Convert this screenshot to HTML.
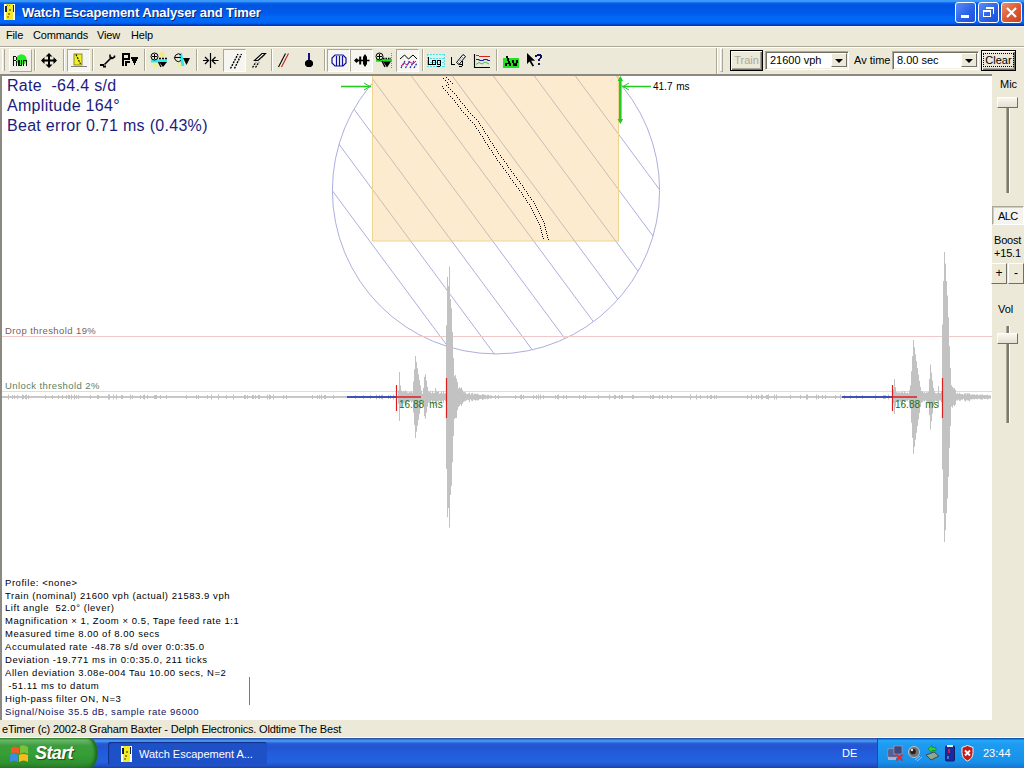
<!DOCTYPE html>
<html><head><meta charset="utf-8">
<style>
*{margin:0;padding:0;box-sizing:border-box}
html,body{width:1024px;height:768px;overflow:hidden;background:#ECE9D8;font-family:"Liberation Sans",sans-serif;position:relative}
.a{position:absolute;white-space:nowrap}
#title{left:0;top:0;width:1024px;height:26px;background:linear-gradient(#3D9BFF 0px,#3A95F8 1.5px,#0A60E6 3px,#0056E2 5px,#0058E8 10px,#005EF0 15px,#0068F4 17px,#0068F8 22px,#005AE8 23.5px,#0038AC 25px,#0038AC 26px)}
#title .t{left:22px;top:5px;letter-spacing:-0.1px;color:#fff;font-weight:bold;font-size:13px;text-shadow:1px 1px 0 #0A1E6E}
.tb{top:2px;width:21px;height:21px;border:1px solid #fff;border-radius:3px;background:linear-gradient(135deg,#5E8CF6,#2760E8 60%,#1F50D8)}
#menu{left:0;top:26px;width:1024px;height:20px;background:#ECE9D8;font-size:11px;border-top:1px solid #F4F2F8;letter-spacing:-0.15px}
#menu span{margin-top:-1px}
#menu span{position:absolute;top:3px}
#tbline{left:0;top:46px;width:1024px;height:1px;background:#ACA899}
#tbline2{left:0;top:47px;width:1024px;height:1px;background:#fff}
#client{left:0;top:74px;width:992px;height:646px;background:#fff;border-top:2px solid #8C8A80;border-left:2px solid #8C8A80}
#panel{left:992px;top:74px;width:32px;height:646px;background:#ECE9D8}
#status{left:0;top:720px;width:1024px;height:18px;border-bottom:1px solid #F8F8FF;background:#ECE9D8;font-size:11px;letter-spacing:-0.17px}
#taskbar{left:0;top:738px;width:1024px;height:30px;background:linear-gradient(#2A56B0 0px,#2A56B0 1px,#4590EA 2px,#4590EA 3.5px,#2A62DA 5px,#2157D2 7px,#2455D4 11px,#225DDC 15px,#2462DE 24px,#1F4FC4 28px,#1A3FA8 30px)}
.sep{top:49px;width:2px;height:22px;border-left:1px solid #ACA899;border-right:1px solid #fff}
.pr{top:49px;height:23px;background:#F6F5F0;border:1px solid #ACA899;border-right-color:#fff;border-bottom-color:#fff}
.info{font-size:9.5px;color:#000;left:5px;letter-spacing:0.55px}
.ms{font-size:10px;color:#000}
.btn{background:#ECE9D8;border:1px solid #000;font-size:11px;text-align:center;box-shadow:inset 1px 1px 0 #fff, inset -1px -1px 0 #716F64, inset -2px -2px 0 #ACA899}
.combo{background:#fff;border:1px solid #fff;border-top-color:#ACA899;border-left-color:#ACA899;box-shadow:inset 1px 1px 0 #716F64, inset -1px -1px 0 #F1EFE2;font-size:11px}
.sl{width:21px;height:11px;background:linear-gradient(#F8F7F2,#E3E0D0);border:1px solid #fff;border-right-color:#716F64;border-bottom-color:#716F64}
</style></head><body>
<div id="title" class="a">
  <svg class="a" style="left:0;top:0" width="20" height="24" shape-rendering="crispEdges">
    <rect x="4" y="4" width="11" height="16" fill="#fff"/>
    <rect x="6" y="4" width="7" height="16" fill="#F4EC20"/>
    <rect x="5" y="6" width="1.5" height="6" fill="#10205A"/>
    <rect x="12.5" y="5" width="1.5" height="7" fill="#10205A"/>
    <rect x="7" y="5" width="1" height="1" fill="#A09010"/><rect x="9" y="5" width="1" height="1" fill="#A09010"/>
    <rect x="9" y="9" width="2" height="2" fill="#908810"/><rect x="8" y="13" width="2" height="2" fill="#908810"/>
    <rect x="7" y="16" width="2" height="2" fill="#E09010"/>
  </svg>
  <div class="a t">Watch Escapement Analyser and Timer</div>
  <div class="a tb" style="left:955px"><div class="a" style="left:5px;top:12px;width:8px;height:3px;background:#fff"></div></div>
  <div class="a tb" style="left:978px"><div class="a" style="left:4px;top:7px;width:8px;height:7px;border:1px solid #fff;border-top-width:2px"></div><div class="a" style="left:7px;top:4px;width:8px;height:7px;border:1px solid #fff;border-top-width:2px;border-left:none;border-bottom:none"></div></div>
  <div class="a tb" style="left:1001px;background:linear-gradient(135deg,#E9916F,#E05A32 50%,#C9431F)"><svg class="a" style="left:3px;top:3px" width="13" height="13"><path d="M2 2L11 11M11 2L2 11" stroke="#fff" stroke-width="2.2"/></svg></div>
</div>
<div id="menu" class="a">
  <span style="left:6px">File</span>
  <span style="left:33px">Commands</span>
  <span style="left:97px">View</span>
  <span style="left:131px">Help</span>
</div>
<div id="tbline" class="a"></div>
<div id="tbline2" class="a"></div>

<!-- toolbar -->
<div class="a" style="left:2px;top:49px;width:3px;height:22px;border-left:1px solid #fff;border-right:1px solid #ACA899"></div>
<div class="a" style="left:9px;top:49px;width:23px;height:23px;background:#F2F0E8;border:1px solid #fff;border-right-color:#ACA899;border-bottom-color:#ACA899"></div>
<div class="a sep" style="left:34px"></div>
<div class="a sep" style="left:63px"></div>
<div class="a pr" style="left:67px;width:23px"></div>
<div class="a sep" style="left:92px"></div>
<div class="a sep" style="left:144px"></div>
<div class="a sep" style="left:196px"></div>
<div class="a pr" style="left:223px;width:23px"></div>
<div class="a sep" style="left:271px"></div>
<div class="a sep" style="left:324px"></div>
<div class="a pr" style="left:327px;width:23px"></div>
<div class="a pr" style="left:350px;width:23px"></div>
<div class="a pr" style="left:396px;width:23px"></div>
<div class="a sep" style="left:422px"></div>
<div class="a sep" style="left:496px"></div>
<div class="a" style="left:716px;top:48px;width:2px;height:26px;border-left:1px solid #ACA899;border-right:1px solid #fff"></div>
<div class="a" style="left:720px;top:48px;width:3px;height:24px;border:1px solid #fff;border-right-color:#ACA899;border-bottom-color:#ACA899"></div>

<svg class="a" style="left:0;top:0" width="1024" height="76">
  <!-- Run -->
  <circle cx="21.5" cy="59.5" r="5.2" fill="#22EE22"/>
  <g fill="#041804" shape-rendering="crispEdges">
    <path d="M13 56h3.3v1h1v3.3h-1v0.7h1v5h-1.3v-5h-1.7v5h-1.3zM14.3 57.2v3h2v-3z"/>
    <path d="M18.4 60h1.2v5h1.1v-5h1.2v6h-3.5z"/>
    <path d="M23 60h4v6h-1.2v-5h-1.6v5h-1.2z"/>
  </g>
  <!-- move -->
  <path d="M49 54.5V66.5M42.5 60.5H55.5" stroke="#000" stroke-width="2"/>
  <path d="M49 53l-3.5 3.5h7zM49 68l-3.5-3.5h7zM41 60.5l3.5-3.5v7zM57 60.5l-3.5-3.5v7z" fill="#000"/>
  <!-- yellow -->
  <rect x="74" y="54" width="8" height="11" fill="#F0F020" stroke="#707020" stroke-width="0.8"/>
  <path d="M76 54.5L80.5 64" stroke="#000" stroke-width="1.1" stroke-dasharray="2 1"/>
  <path d="M71 66.5H87" stroke="#808080" stroke-width="1"/>
  <!-- wrench -->
  <path d="M104.5 64.5L112 57" stroke="#000" stroke-width="1.6"/>
  <path d="M110 54.5v2.5l2 1.5 2.5-1.5v-1.5" stroke="#000" stroke-width="1.5" fill="none"/>
  <path d="M100 64h4v1.5h2v2h-3v-1.5h-3z" fill="#000"/>
  <!-- P down -->
  <g fill="#000" shape-rendering="crispEdges">
    <path d="M122 53h8v7h-6v5.5h-2zM124 55v3h4v-3z"/>
    <path d="M125 61h5v1.5h-3v3h-2z"/>
    <path d="M131 57h7v2h-1v2h-1v2h-1v1.5h-1v-1.5h-1v-2h-1v-2h-1z"/>
  </g>
  <!-- zoom + -->
  <circle cx="162" cy="54.5" r="2.6" fill="#F4E880"/>
  <circle cx="155.5" cy="64.5" r="2.6" fill="#F0F090"/>
  <path d="M151 61H167" stroke="#30E8F0" stroke-width="3"/>
  <circle cx="154.5" cy="56.5" r="3.5" stroke="#000" stroke-width="1" fill="none"/>
  <path d="M152 56h5v1h-5zM154 54h1v5h-1z" fill="#000" shape-rendering="crispEdges"/>
  <path d="M159 58.5h8" stroke="#000" stroke-width="1.3" stroke-dasharray="2 1"/>
  <path d="M159 62h8l-4 5z" fill="#000"/>
  <path d="M158.5 62l2.5 5" stroke="#000" stroke-width="1.3"/>
  <!-- zoom - -->
  <circle cx="180" cy="64.5" r="2.2" fill="#F0F090"/>
  <path d="M180.5 53L183 66" stroke="#30E8F0" stroke-width="3"/>
  <path d="M181 55a3.8 3.8 0 1 0 0 5.5" stroke="#000" stroke-width="1" fill="none"/>
  <path d="M175 57.5h6" stroke="#000" stroke-width="1.1"/>
  <path d="M183 58h7l-3.5 7z" fill="#000"/>
  <!-- ->|<- -->
  <path d="M210.5 53V68M203 60.5h5.5M212.5 60.5h6" stroke="#000" stroke-width="1.2"/>
  <path d="M205 57l3.5 3.5-3.5 3.5M215.5 57l-3.5 3.5 3.5 3.5" stroke="#000" stroke-width="1.2" fill="none"/>
  <!-- // -->
  <path d="M230.5 68.5L238 54M234.5 68.5L241.5 54" stroke="#000" stroke-width="1.4" stroke-dasharray="2 1"/>
  <!-- pencil // -->
  <path d="M254.5 60.5l7.5-7h3.5l-7.5 7z" fill="#fff" stroke="#000" stroke-width="1.1"/>
  <path d="M259 60l6-5" stroke="#000" stroke-width="0.8" stroke-dasharray="1 1"/>
  <path d="M252.5 67.5L256 62M255.5 67.5L259 62" stroke="#000" stroke-width="1.3" stroke-dasharray="2 1"/>
  <!-- red black // -->
  <path d="M278.5 67L285.5 53.5" stroke="#000" stroke-width="1.1"/>
  <path d="M281.5 67L288.5 53.5" stroke="#C02020" stroke-width="1.1"/>
  <!-- thermometer -->
  <path d="M309 53V61" stroke="#10108A" stroke-width="2"/>
  <path d="M307 60h4l2 2v3l-2 2h-4l-2-2v-3z" fill="#000"/>
  <!-- octagon bars -->
  <path d="M335 55h8l3 3v5l-3 3h-8l-3-3v-5z" fill="none" stroke="#1010A0" stroke-width="1.2"/>
  <path d="M336.5 56v10M339.5 56v10M342.5 56v10" stroke="#1010A0" stroke-width="1.2"/>
  <!-- barbell -->
  <path d="M354 60.5l2.5-2.5 2.5 2.5-2.5 2.5z" fill="#000"/>
  <path d="M358 60.5h11.5" stroke="#000" stroke-width="1.6"/>
  <path d="M360.2 56.5v8" stroke="#000" stroke-width="2"/>
  <path d="M365 54l2 3v7l-2 3l-2-3v-7z" fill="#000"/>
  <!-- green zoom -->
  <path d="M376 60.3H392" stroke="#22E022" stroke-width="3"/>
  <path d="M391.5 53V68" stroke="#22CC22" stroke-width="1" stroke-dasharray="1 1"/>
  <circle cx="379.5" cy="56.5" r="3.5" stroke="#000" stroke-width="1" fill="none"/>
  <path d="M377 56h5v1h-5zM379 54h1v5h-1z" fill="#000" shape-rendering="crispEdges"/>
  <path d="M383 58.5h8" stroke="#000" stroke-width="1.3" stroke-dasharray="1.5 1"/>
  <path d="M383 61.5h8l-4 6z" fill="#000"/>
  <path d="M382 61l3 6" stroke="#000" stroke-width="1.4"/>
  <!-- wave -->
  <path d="M400 59l4.5-4 4 4 4.5-4 4 4" stroke="#000" stroke-width="1" fill="none"/>
  <path d="M401 68l4-7M405.5 68l4-7M410 68l4-7M414 68l3-5" stroke="#2020B0" stroke-width="1.2" stroke-dasharray="2 1"/>
  <path d="M401 66l3-3 3 2 3-3 3 2 3-3" stroke="#C02080" stroke-width="1" fill="none"/>
  <!-- Log -->
  <rect x="427" y="54" width="18" height="13" fill="#D8F4F0"/>
  <g stroke="#58DCE0" stroke-width="1" stroke-dasharray="2 1" shape-rendering="crispEdges"><path d="M427 54.5h18M427 58.5h18M427 62.5h18M427 66.5h18M427.5 54v13M444.5 54v13"/></g>
  <g fill="#000" shape-rendering="crispEdges">
    <path d="M428 57h1v7h3v1h-4z"/>
    <path d="M432 60h4v5h-4zM433 61v3h2v-3z"/>
    <path d="M437 60h4v6h-1v1h-3v-1h3v-1h-3zM438 61v3h2v-3z"/>
  </g>
  <!-- Log pencil -->
  <g fill="#000" shape-rendering="crispEdges">
    <path d="M451 57h1v7h3v1h-4z"/>
    <path d="M459 61h4v5h-1v1h-3v-1h3v-1h-3zM460 62v2h2v-2z"/>
  </g>
  <path d="M456.5 62.5l6.5-8 2.5 2-6.5 8z" fill="#fff" stroke="#000" stroke-width="1"/>
  <path d="M458.5 62.5l5-6" stroke="#000" stroke-width="0.7" stroke-dasharray="1 1"/>
  <!-- chart -->
  <path d="M474.5 54V67.5H490" stroke="#000" stroke-width="1.1" fill="none"/>
  <path d="M476 55h3v1h11v1h-11v-1h-3z" fill="#D82020" shape-rendering="crispEdges"/>
  <path d="M476 59.5h2.5l1.5 1h3l1-1h3l1 1h2" stroke="#1818B0" stroke-width="1.2" fill="none"/>
  <path d="M476 64.5l3-2 3 1.5 3-2 4 2" stroke="#40C040" stroke-width="1" fill="none"/>
  <!-- Av -->
  <rect x="503" y="58" width="16" height="10" fill="#22E022"/>
  <g fill="#000" shape-rendering="crispEdges">
    <path d="M505.5 56h2v2h1v3h1v2h1v2.5h-2v-2h-2v2h-2v-2.5h1v-2h1v-3zM506 61v1.5h2v-1.5z"/>
    <path d="M511.5 60h2v3h2v-3h2v3h-1v2.5h-4v-2.5h-1z"/>
  </g>
  <!-- ? arrow -->
  <path d="M527 53v11l2.5-2.5 3 5 1.6-0.8-3-5h4z" fill="#000"/>
  <g fill="#101060" shape-rendering="crispEdges">
    <path d="M535 55h2v-1h4v1h1v3h-1v1h-1v1.5h-2v-2h1v-1h1v-2h-3v1h-2zM538 63h2v2h-2z"/>
  </g>
</svg>

<div class="a btn" style="left:730px;top:50px;width:33px;height:21px;color:#ACA899;line-height:19px;border-color:#000">Train</div>
<div class="a combo" style="left:765px;top:51px;width:84px;height:19px"><span class="a" style="left:4px;top:2px">21600 vph</span>
  <div class="a" style="right:1px;top:1px;width:16px;height:14px;background:#ECE9D8;border:1px solid #fff;border-right-color:#716F64;border-bottom-color:#716F64"><svg class="a" style="left:3px;top:5px" width="8" height="5"><path d="M0 0h8l-4 4z" fill="#000"/></svg></div></div>
<span class="a" style="left:854px;top:54px;font-size:11px">Av time</span>
<div class="a combo" style="left:892px;top:51px;width:87px;height:19px"><span class="a" style="left:4px;top:2px">8.00 sec</span>
  <div class="a" style="right:1px;top:1px;width:16px;height:14px;background:#ECE9D8;border:1px solid #fff;border-right-color:#716F64;border-bottom-color:#716F64"><svg class="a" style="left:3px;top:5px" width="8" height="5"><path d="M0 0h8l-4 4z" fill="#000"/></svg></div></div>
<div class="a btn" style="left:981px;top:50px;width:35px;height:21px;line-height:19px;border-color:#000"><span style="border:1px dotted #000;padding:0 1px">Clear</span></div>

<div id="client" class="a"></div>

<svg class="a" style="left:0;top:0" width="1024" height="768">
  <defs>
    <clipPath id="cl"><rect x="2" y="76" width="990" height="644"/></clipPath>
    <clipPath id="circ"><circle cx="496" cy="190.3" r="163.6"/></clipPath>
    <clipPath id="rc"><rect x="373" y="76" width="245" height="165"/></clipPath>
  </defs>
  <g clip-path="url(#cl)">
    <circle cx="496" cy="190.3" r="163.6" fill="none" stroke="#ACAEDE" stroke-width="1"/>
    <g clip-path="url(#circ)"><path d="M-218.9 0.0L77.4 400.0M-177.9 0.0L118.4 400.0M-136.9 0.0L159.4 400.0M-95.9 0.0L200.4 400.0M-54.9 0.0L241.4 400.0M-13.9 0.0L282.4 400.0M27.1 0.0L323.4 400.0M68.1 0.0L364.4 400.0M109.1 0.0L405.4 400.0M150.1 0.0L446.4 400.0M191.1 0.0L487.4 400.0M232.1 0.0L528.4 400.0M273.1 0.0L569.4 400.0M314.1 0.0L610.4 400.0M355.1 0.0L651.4 400.0M396.1 0.0L692.4 400.0M437.1 0.0L733.4 400.0M478.1 0.0L774.4 400.0M519.1 0.0L815.4 400.0M560.1 0.0L856.4 400.0M601.1 0.0L897.4 400.0M642.1 0.0L938.4 400.0" stroke="#ACAEDE" stroke-width="1" fill="none"/></g>
    <rect x="372.5" y="70" width="246" height="171" fill="#FDEBD0" stroke="#EDD490" stroke-width="1"/>
    <g clip-path="url(#rc)"><path d="M-218.9 0.0L77.4 400.0M-177.9 0.0L118.4 400.0M-136.9 0.0L159.4 400.0M-95.9 0.0L200.4 400.0M-54.9 0.0L241.4 400.0M-13.9 0.0L282.4 400.0M27.1 0.0L323.4 400.0M68.1 0.0L364.4 400.0M109.1 0.0L405.4 400.0M150.1 0.0L446.4 400.0M191.1 0.0L487.4 400.0M232.1 0.0L528.4 400.0M273.1 0.0L569.4 400.0M314.1 0.0L610.4 400.0M355.1 0.0L651.4 400.0M396.1 0.0L692.4 400.0M437.1 0.0L733.4 400.0M478.1 0.0L774.4 400.0M519.1 0.0L815.4 400.0M560.1 0.0L856.4 400.0M601.1 0.0L897.4 400.0M642.1 0.0L938.4 400.0" stroke="#C8BDB4" stroke-width="1" fill="none"/></g>
    <!-- dotted curves -->
    <path d="M442 86h1v1h-1zM443 88h1v1h-1zM445 90h1v1h-1zM447 92h1v1h-1zM448 94h1v1h-1zM450 96h1v1h-1zM452 98h1v1h-1zM454 100h1v1h-1zM455 102h1v1h-1zM457 104h1v1h-1zM458 106h1v1h-1zM460 108h1v1h-1zM461 110h1v1h-1zM463 112h1v1h-1zM465 114h1v1h-1zM467 116h1v1h-1zM468 118h1v1h-1zM470 120h1v1h-1zM472 122h1v1h-1zM474 124h1v1h-1zM475 126h1v1h-1zM476 128h1v1h-1zM478 130h1v1h-1zM479 132h1v1h-1zM480 134h1v1h-1zM482 136h1v1h-1zM483 138h1v1h-1zM484 140h1v1h-1zM485 142h1v1h-1zM487 144h1v1h-1zM488 146h1v1h-1zM489 148h1v1h-1zM491 150h1v1h-1zM492 152h1v1h-1zM493 154h1v1h-1zM495 156h1v1h-1zM496 158h1v1h-1zM497 160h1v1h-1zM499 162h1v1h-1zM500 164h1v1h-1zM502 166h1v1h-1zM503 168h1v1h-1zM505 170h1v1h-1zM506 172h1v1h-1zM508 174h1v1h-1zM509 176h1v1h-1zM510 178h1v1h-1zM512 180h1v1h-1zM513 182h1v1h-1zM515 184h1v1h-1zM516 186h1v1h-1zM518 188h1v1h-1zM519 190h1v1h-1zM521 192h1v1h-1zM522 194h1v1h-1zM523 196h1v1h-1zM525 198h1v1h-1zM526 200h1v1h-1zM527 202h1v1h-1zM529 204h1v1h-1zM530 206h1v1h-1zM531 208h1v1h-1zM532 210h1v1h-1zM533 212h1v1h-1zM534 214h1v1h-1zM535 216h1v1h-1zM536 218h1v1h-1zM537 220h1v1h-1zM538 222h1v1h-1zM539 224h1v1h-1zM540 226h1v1h-1zM540 228h1v1h-1zM541 230h1v1h-1zM541 232h1v1h-1zM542 234h1v1h-1zM542 236h1v1h-1zM543 238h1v1h-1zM446 85h1v1h-1zM448 87h1v1h-1zM450 89h1v1h-1zM452 91h1v1h-1zM454 93h1v1h-1zM456 95h1v1h-1zM457 97h1v1h-1zM459 99h1v1h-1zM460 101h1v1h-1zM462 103h1v1h-1zM464 105h1v1h-1zM465 107h1v1h-1zM467 109h1v1h-1zM468 111h1v1h-1zM470 113h1v1h-1zM472 115h1v1h-1zM474 117h1v1h-1zM476 119h1v1h-1zM478 121h1v1h-1zM479 123h1v1h-1zM480 125h1v1h-1zM482 127h1v1h-1zM483 129h1v1h-1zM484 131h1v1h-1zM485 133h1v1h-1zM487 135h1v1h-1zM488 137h1v1h-1zM489 139h1v1h-1zM490 141h1v1h-1zM492 143h1v1h-1zM493 145h1v1h-1zM494 147h1v1h-1zM496 149h1v1h-1zM497 151h1v1h-1zM498 153h1v1h-1zM500 155h1v1h-1zM501 157h1v1h-1zM503 159h1v1h-1zM504 161h1v1h-1zM506 163h1v1h-1zM507 165h1v1h-1zM508 167h1v1h-1zM510 169h1v1h-1zM511 171h1v1h-1zM513 173h1v1h-1zM514 175h1v1h-1zM516 177h1v1h-1zM517 179h1v1h-1zM519 181h1v1h-1zM520 183h1v1h-1zM522 185h1v1h-1zM523 187h1v1h-1zM524 189h1v1h-1zM526 191h1v1h-1zM527 193h1v1h-1zM528 195h1v1h-1zM530 197h1v1h-1zM531 199h1v1h-1zM533 201h1v1h-1zM534 203h1v1h-1zM535 205h1v1h-1zM536 207h1v1h-1zM537 209h1v1h-1zM538 211h1v1h-1zM539 213h1v1h-1zM540 215h1v1h-1zM541 217h1v1h-1zM542 219h1v1h-1zM543 221h1v1h-1zM544 223h1v1h-1zM544 225h1v1h-1zM545 227h1v1h-1zM545 229h1v1h-1zM546 231h1v1h-1zM546 233h1v1h-1zM547 235h1v1h-1zM547 237h1v1h-1zM548 239h1v1h-1zM443 78h1v1h-1zM445 80h1v1h-1zM447 82h1v1h-1zM448 84h1v1h-1zM446 77h1v1h-1zM448 79h1v1h-1zM450 81h1v1h-1zM452 83h1v1h-1z" fill="#000" shape-rendering="crispEdges"/>
    <!-- green arrows -->
    <path d="M341 86.5H371" stroke="#22CC22" stroke-width="1.6"/>
    <path d="M364 83l6 3.5-6 3.5" stroke="#22CC22" stroke-width="1" fill="none"/>
    <path d="M620.3 78V122" stroke="#22CC22" stroke-width="2.6"/>
    <path d="M617.5 81l2.8-5 2.8 5zM617.5 119l2.8 5 2.8-5z" fill="#22CC22"/>
    <path d="M622 86.5H651" stroke="#22CC22" stroke-width="1.5"/>
    <path d="M629 83l-6 3.5 6 3.5" stroke="#22CC22" stroke-width="1" fill="none"/>
    <!-- thresholds -->
    <path d="M2 336.5H992" stroke="#F0C8C8" stroke-width="1"/>
    <path d="M2 391.5H992" stroke="#CDE6CD" stroke-width="1"/>
    <!-- waveform -->
    <path d="M2.5 396.1V397.9M3.5 396.1V397.9M4.5 396.1V397.9M5.5 396.1V397.9M6.5 396.1V397.9M7.5 396.1V397.9M8.5 394.5V399.5M9.5 396.1V397.9M10.5 396.1V397.9M11.5 396.1V397.9M12.5 395.0V399.0M13.5 396.1V397.9M14.5 395.0V399.0M15.5 396.1V397.9M16.5 396.1V397.9M17.5 395.0V399.0M18.5 396.1V397.9M19.5 396.1V397.9M20.5 396.1V397.9M21.5 396.1V397.9M22.5 394.5V399.5M23.5 395.0V399.0M24.5 396.1V397.9M25.5 395.0V399.0M26.5 394.5V399.5M27.5 396.1V397.9M28.5 395.0V399.0M29.5 396.1V397.9M30.5 396.1V397.9M31.5 396.1V397.9M32.5 396.1V397.9M33.5 396.1V397.9M34.5 396.1V397.9M35.5 396.1V397.9M36.5 396.1V397.9M37.5 396.1V397.9M38.5 396.1V397.9M39.5 396.1V397.9M40.5 396.1V397.9M41.5 396.1V397.9M42.5 396.1V397.9M43.5 396.1V397.9M44.5 396.1V397.9M45.5 395.0V399.0M46.5 396.1V397.9M47.5 396.1V397.9M48.5 396.1V397.9M49.5 396.1V397.9M50.5 396.1V397.9M51.5 396.1V397.9M52.5 395.0V399.0M53.5 396.1V397.9M54.5 396.1V397.9M55.5 396.1V397.9M56.5 396.1V397.9M57.5 396.1V397.9M58.5 395.0V399.0M59.5 396.1V397.9M60.5 396.1V397.9M61.5 396.1V397.9M62.5 395.0V399.0M63.5 396.1V397.9M64.5 396.1V397.9M65.5 396.1V397.9M66.5 395.0V399.0M67.5 396.1V397.9M68.5 395.0V399.0M69.5 395.0V399.0M70.5 396.1V397.9M71.5 394.5V399.5M72.5 396.1V397.9M73.5 396.1V397.9M74.5 394.5V399.5M75.5 396.1V397.9M76.5 395.0V399.0M77.5 396.1V397.9M78.5 395.0V399.0M79.5 396.1V397.9M80.5 396.1V397.9M81.5 396.1V397.9M82.5 396.1V397.9M83.5 396.1V397.9M84.5 396.1V397.9M85.5 396.1V397.9M86.5 396.1V397.9M87.5 396.1V397.9M88.5 396.1V397.9M89.5 396.1V397.9M90.5 395.0V399.0M91.5 396.1V397.9M92.5 396.1V397.9M93.5 396.1V397.9M94.5 396.1V397.9M95.5 396.1V397.9M96.5 396.1V397.9M97.5 395.0V399.0M98.5 395.0V399.0M99.5 396.1V397.9M100.5 396.1V397.9M101.5 396.1V397.9M102.5 396.1V397.9M103.5 396.1V397.9M104.5 396.1V397.9M105.5 396.1V397.9M106.5 396.1V397.9M107.5 396.1V397.9M108.5 394.5V399.5M109.5 394.5V399.5M110.5 396.1V397.9M111.5 396.1V397.9M112.5 396.1V397.9M113.5 394.5V399.5M114.5 396.1V397.9M115.5 396.1V397.9M116.5 394.5V399.5M117.5 396.1V397.9M118.5 396.1V397.9M119.5 396.1V397.9M120.5 396.1V397.9M121.5 395.0V399.0M122.5 395.0V399.0M123.5 396.1V397.9M124.5 396.1V397.9M125.5 396.1V397.9M126.5 396.1V397.9M127.5 396.1V397.9M128.5 396.1V397.9M129.5 396.1V397.9M130.5 394.5V399.5M131.5 396.1V397.9M132.5 395.0V399.0M133.5 396.1V397.9M134.5 396.1V397.9M135.5 396.1V397.9M136.5 396.1V397.9M137.5 396.1V397.9M138.5 396.1V397.9M139.5 396.1V397.9M140.5 395.0V399.0M141.5 396.1V397.9M142.5 396.1V397.9M143.5 395.0V399.0M144.5 394.5V399.5M145.5 396.1V397.9M146.5 396.1V397.9M147.5 395.0V399.0M148.5 396.1V397.9M149.5 396.1V397.9M150.5 396.1V397.9M151.5 396.1V397.9M152.5 396.1V397.9M153.5 396.1V397.9M154.5 395.0V399.0M155.5 395.0V399.0M156.5 395.0V399.0M157.5 396.1V397.9M158.5 396.1V397.9M159.5 396.1V397.9M160.5 395.0V399.0M161.5 396.1V397.9M162.5 396.1V397.9M163.5 396.1V397.9M164.5 396.1V397.9M165.5 396.1V397.9M166.5 395.0V399.0M167.5 396.1V397.9M168.5 396.1V397.9M169.5 396.1V397.9M170.5 396.1V397.9M171.5 396.1V397.9M172.5 396.1V397.9M173.5 396.1V397.9M174.5 396.1V397.9M175.5 396.1V397.9M176.5 396.1V397.9M177.5 396.1V397.9M178.5 396.1V397.9M179.5 396.1V397.9M180.5 396.1V397.9M181.5 396.1V397.9M182.5 396.1V397.9M183.5 396.1V397.9M184.5 396.1V397.9M185.5 396.1V397.9M186.5 395.0V399.0M187.5 396.1V397.9M188.5 396.1V397.9M189.5 396.1V397.9M190.5 396.1V397.9M191.5 396.1V397.9M192.5 396.1V397.9M193.5 396.1V397.9M194.5 396.1V397.9M195.5 396.1V397.9M196.5 395.0V399.0M197.5 396.1V397.9M198.5 395.0V399.0M199.5 396.1V397.9M200.5 396.1V397.9M201.5 396.1V397.9M202.5 396.1V397.9M203.5 396.1V397.9M204.5 396.1V397.9M205.5 396.1V397.9M206.5 396.1V397.9M207.5 395.0V399.0M208.5 396.1V397.9M209.5 396.1V397.9M210.5 396.1V397.9M211.5 394.5V399.5M212.5 396.1V397.9M213.5 396.1V397.9M214.5 396.1V397.9M215.5 396.1V397.9M216.5 396.1V397.9M217.5 396.1V397.9M218.5 394.5V399.5M219.5 396.1V397.9M220.5 396.1V397.9M221.5 396.1V397.9M222.5 396.1V397.9M223.5 396.1V397.9M224.5 396.1V397.9M225.5 396.1V397.9M226.5 395.0V399.0M227.5 396.1V397.9M228.5 396.1V397.9M229.5 396.1V397.9M230.5 396.1V397.9M231.5 396.1V397.9M232.5 396.1V397.9M233.5 394.5V399.5M234.5 396.1V397.9M235.5 396.1V397.9M236.5 396.1V397.9M237.5 396.1V397.9M238.5 396.1V397.9M239.5 396.1V397.9M240.5 396.1V397.9M241.5 396.1V397.9M242.5 396.1V397.9M243.5 396.1V397.9M244.5 395.0V399.0M245.5 395.0V399.0M246.5 396.1V397.9M247.5 395.0V399.0M248.5 396.1V397.9M249.5 396.1V397.9M250.5 396.1V397.9M251.5 396.1V397.9M252.5 395.0V399.0M253.5 395.0V399.0M254.5 396.1V397.9M255.5 395.0V399.0M256.5 396.1V397.9M257.5 396.1V397.9M258.5 395.0V399.0M259.5 395.0V399.0M260.5 396.1V397.9M261.5 396.1V397.9M262.5 396.1V397.9M263.5 396.1V397.9M264.5 396.1V397.9M265.5 396.1V397.9M266.5 396.1V397.9M267.5 394.5V399.5M268.5 396.1V397.9M269.5 394.5V399.5M270.5 395.0V399.0M271.5 396.1V397.9M272.5 396.1V397.9M273.5 394.5V399.5M274.5 396.1V397.9M275.5 396.1V397.9M276.5 396.1V397.9M277.5 396.1V397.9M278.5 396.1V397.9M279.5 396.1V397.9M280.5 396.1V397.9M281.5 396.1V397.9M282.5 396.1V397.9M283.5 395.0V399.0M284.5 396.1V397.9M285.5 396.1V397.9M286.5 395.0V399.0M287.5 396.1V397.9M288.5 396.1V397.9M289.5 396.1V397.9M290.5 396.1V397.9M291.5 396.1V397.9M292.5 396.1V397.9M293.5 396.1V397.9M294.5 396.1V397.9M295.5 396.1V397.9M296.5 396.1V397.9M297.5 396.1V397.9M298.5 396.1V397.9M299.5 396.1V397.9M300.5 396.1V397.9M301.5 396.1V397.9M302.5 396.1V397.9M303.5 396.1V397.9M304.5 396.1V397.9M305.5 396.1V397.9M306.5 396.1V397.9M307.5 396.1V397.9M308.5 396.1V397.9M309.5 396.1V397.9M310.5 396.1V397.9M311.5 396.1V397.9M312.5 395.0V399.0M313.5 396.1V397.9M314.5 396.1V397.9M315.5 396.1V397.9M316.5 396.1V397.9M317.5 395.0V399.0M318.5 396.1V397.9M319.5 395.0V399.0M320.5 396.1V397.9M321.5 394.5V399.5M322.5 396.1V397.9M323.5 396.1V397.9M324.5 395.0V399.0M325.5 395.0V399.0M326.5 396.1V397.9M327.5 396.1V397.9M328.5 396.1V397.9M329.5 396.1V397.9M330.5 396.1V397.9M331.5 396.1V397.9M332.5 396.1V397.9M333.5 395.0V399.0M334.5 396.1V397.9M335.5 396.1V397.9M336.5 396.1V397.9M337.5 396.1V397.9M338.5 396.1V397.9M339.5 396.1V397.9M340.5 396.1V397.9M341.5 396.1V397.9M342.5 396.1V397.9M343.5 396.1V397.9M344.5 396.1V397.9M345.5 396.1V397.9M346.5 396.1V397.9M347.5 396.1V397.9M348.5 396.1V397.9M349.5 396.1V397.9M350.5 396.1V397.9M351.5 396.1V397.9M352.5 396.1V397.9M353.5 396.1V397.9M354.5 396.1V397.9M355.5 395.0V399.0M356.5 396.1V397.9M357.5 396.1V397.9M358.5 396.1V397.9M359.5 396.1V397.9M360.5 396.1V397.9M361.5 396.1V397.9M362.5 396.1V397.9M363.5 395.0V399.0M364.5 396.1V397.9M365.5 396.1V397.9M366.5 396.1V397.9M367.5 396.1V397.9M368.5 396.1V397.9M369.5 396.1V397.9M370.5 395.0V399.0M371.5 396.1V397.9M372.5 396.1V397.9M373.5 396.1V397.9M374.5 396.1V397.9M375.5 396.1V397.9M376.5 394.5V399.5M377.5 396.1V397.9M378.5 396.1V397.9M379.5 395.0V399.0M380.5 396.1V397.9M381.5 395.0V399.0M382.5 394.5V399.5M383.5 396.1V397.9M384.5 396.1V397.9M385.5 396.1V397.9M386.5 396.1V397.9M387.5 396.1V397.9M388.5 395.0V399.0M389.5 396.1V397.9M390.5 395.0V399.0M391.5 396.1V397.9M392.5 396.1V397.9M393.5 394.5V399.5M394.5 396.1V397.9M395.5 396.1V397.9M396.5 396.1V397.9M397.5 396.1V397.9M398.5 390.4V404.0M399.5 372.0V421.0M400.5 385.4V408.2M401.5 390.6V403.3M402.5 391.5V402.7M403.5 391.1V403.5M404.5 391.4V402.6M405.5 390.4V404.2M406.5 391.4V403.1M407.5 392.5V401.7M408.5 392.8V401.3M409.5 392.0V402.0M410.5 392.2V400.9M411.5 391.2V402.9M412.5 392.6V401.4M413.5 381.5V412.5M414.5 369.2V424.8M415.5 356.0V438.0M416.5 362.2V431.8M417.5 368.3V425.7M418.5 374.2V419.8M419.5 379.9V414.1M420.5 385.4V408.6M421.5 390.6V403.4M422.5 393.7V400.0M423.5 387.9V405.7M424.5 376.9V416.3M425.5 374.3V418.8M426.5 380.7V412.7M427.5 386.8V406.8M428.5 390.9V402.6M429.5 392.2V402.6M430.5 390.7V403.2M431.5 393.2V400.5M432.5 390.9V404.1M433.5 393.2V401.3M434.5 392.7V401.2M435.5 388.0V406.0M436.5 390.8V402.5M437.5 391.9V401.4M438.5 391.2V401.8M439.5 393.6V400.7M440.5 393.0V401.7M441.5 391.3V403.2M442.5 393.5V400.7M443.5 391.1V402.8M444.5 393.7V399.9M445.5 393.1V401.3M446.5 325.2V468.8M447.5 276.9V517.2M448.5 286.1V508.0M449.5 266.5V527.6M450.5 299.1V495.0M451.5 308.3V485.8M452.5 331.8V462.3M453.5 357.9V436.2M454.5 376.3V419.0M455.5 374.9V418.0M456.5 378.7V418.2M457.5 381.9V410.4M458.5 388.4V407.1M459.5 387.3V405.8M460.5 388.2V404.4M461.5 387.6V406.1M462.5 390.0V404.0M463.5 392.2V402.0M464.5 392.1V401.4M465.5 392.5V400.8M466.5 393.9V400.5M467.5 394.0V399.7M468.5 393.4V400.2M469.5 392.7V402.2M470.5 394.7V399.3M471.5 393.2V400.6M472.5 392.9V401.1M473.5 394.6V399.5M474.5 393.7V400.1M475.5 393.8V400.6M476.5 394.1V399.9M477.5 393.6V400.6M478.5 394.3V400.2M479.5 395.0V399.2M480.5 395.1V399.0M481.5 395.0V398.9M482.5 394.2V400.1M483.5 394.3V399.4M484.5 394.8V398.9M485.5 394.8V399.2M486.5 395.6V398.4M487.5 394.8V399.3M488.5 394.7V399.0M489.5 395.7V398.1M490.5 395.3V398.6M491.5 395.5V398.4M492.5 396.1V397.9M493.5 396.1V397.9M494.5 396.1V397.9M495.5 395.0V399.0M496.5 396.1V397.9M497.5 396.1V397.9M498.5 395.0V399.0M499.5 396.1V397.9M500.5 396.1V397.9M501.5 396.1V397.9M502.5 396.1V397.9M503.5 396.1V397.9M504.5 396.1V397.9M505.5 396.1V397.9M506.5 396.1V397.9M507.5 396.1V397.9M508.5 396.1V397.9M509.5 396.1V397.9M510.5 396.1V397.9M511.5 396.1V397.9M512.5 396.1V397.9M513.5 396.1V397.9M514.5 396.1V397.9M515.5 395.0V399.0M516.5 396.1V397.9M517.5 396.1V397.9M518.5 396.1V397.9M519.5 396.1V397.9M520.5 395.0V399.0M521.5 394.5V399.5M522.5 396.1V397.9M523.5 395.0V399.0M524.5 396.1V397.9M525.5 396.1V397.9M526.5 396.1V397.9M527.5 396.1V397.9M528.5 396.1V397.9M529.5 396.1V397.9M530.5 396.1V397.9M531.5 396.1V397.9M532.5 396.1V397.9M533.5 395.0V399.0M534.5 396.1V397.9M535.5 396.1V397.9M536.5 395.0V399.0M537.5 396.1V397.9M538.5 394.5V399.5M539.5 396.1V397.9M540.5 394.5V399.5M541.5 396.1V397.9M542.5 396.1V397.9M543.5 395.0V399.0M544.5 396.1V397.9M545.5 396.1V397.9M546.5 396.1V397.9M547.5 396.1V397.9M548.5 396.1V397.9M549.5 396.1V397.9M550.5 396.1V397.9M551.5 396.1V397.9M552.5 396.1V397.9M553.5 396.1V397.9M554.5 396.1V397.9M555.5 395.0V399.0M556.5 396.1V397.9M557.5 395.0V399.0M558.5 394.5V399.5M559.5 396.1V397.9M560.5 396.1V397.9M561.5 396.1V397.9M562.5 396.1V397.9M563.5 395.0V399.0M564.5 396.1V397.9M565.5 396.1V397.9M566.5 395.0V399.0M567.5 396.1V397.9M568.5 396.1V397.9M569.5 396.1V397.9M570.5 396.1V397.9M571.5 396.1V397.9M572.5 396.1V397.9M573.5 396.1V397.9M574.5 396.1V397.9M575.5 396.1V397.9M576.5 396.1V397.9M577.5 396.1V397.9M578.5 396.1V397.9M579.5 395.0V399.0M580.5 396.1V397.9M581.5 396.1V397.9M582.5 396.1V397.9M583.5 395.0V399.0M584.5 396.1V397.9M585.5 395.0V399.0M586.5 396.1V397.9M587.5 396.1V397.9M588.5 396.1V397.9M589.5 396.1V397.9M590.5 396.1V397.9M591.5 396.1V397.9M592.5 396.1V397.9M593.5 396.1V397.9M594.5 396.1V397.9M595.5 396.1V397.9M596.5 396.1V397.9M597.5 396.1V397.9M598.5 395.0V399.0M599.5 396.1V397.9M600.5 396.1V397.9M601.5 396.1V397.9M602.5 396.1V397.9M603.5 396.1V397.9M604.5 396.1V397.9M605.5 396.1V397.9M606.5 396.1V397.9M607.5 396.1V397.9M608.5 396.1V397.9M609.5 394.5V399.5M610.5 396.1V397.9M611.5 396.1V397.9M612.5 396.1V397.9M613.5 396.1V397.9M614.5 395.0V399.0M615.5 395.0V399.0M616.5 396.1V397.9M617.5 396.1V397.9M618.5 396.1V397.9M619.5 395.0V399.0M620.5 396.1V397.9M621.5 395.0V399.0M622.5 395.0V399.0M623.5 396.1V397.9M624.5 396.1V397.9M625.5 396.1V397.9M626.5 396.1V397.9M627.5 396.1V397.9M628.5 396.1V397.9M629.5 396.1V397.9M630.5 396.1V397.9M631.5 396.1V397.9M632.5 395.0V399.0M633.5 395.0V399.0M634.5 396.1V397.9M635.5 396.1V397.9M636.5 396.1V397.9M637.5 396.1V397.9M638.5 396.1V397.9M639.5 396.1V397.9M640.5 396.1V397.9M641.5 396.1V397.9M642.5 396.1V397.9M643.5 396.1V397.9M644.5 396.1V397.9M645.5 396.1V397.9M646.5 396.1V397.9M647.5 396.1V397.9M648.5 396.1V397.9M649.5 396.1V397.9M650.5 395.0V399.0M651.5 396.1V397.9M652.5 395.0V399.0M653.5 395.0V399.0M654.5 396.1V397.9M655.5 396.1V397.9M656.5 396.1V397.9M657.5 396.1V397.9M658.5 396.1V397.9M659.5 395.0V399.0M660.5 396.1V397.9M661.5 396.1V397.9M662.5 395.0V399.0M663.5 396.1V397.9M664.5 396.1V397.9M665.5 396.1V397.9M666.5 396.1V397.9M667.5 395.0V399.0M668.5 396.1V397.9M669.5 396.1V397.9M670.5 396.1V397.9M671.5 395.0V399.0M672.5 396.1V397.9M673.5 396.1V397.9M674.5 396.1V397.9M675.5 396.1V397.9M676.5 396.1V397.9M677.5 396.1V397.9M678.5 396.1V397.9M679.5 396.1V397.9M680.5 396.1V397.9M681.5 396.1V397.9M682.5 396.1V397.9M683.5 396.1V397.9M684.5 396.1V397.9M685.5 396.1V397.9M686.5 396.1V397.9M687.5 396.1V397.9M688.5 396.1V397.9M689.5 396.1V397.9M690.5 394.5V399.5M691.5 396.1V397.9M692.5 396.1V397.9M693.5 396.1V397.9M694.5 396.1V397.9M695.5 396.1V397.9M696.5 394.5V399.5M697.5 396.1V397.9M698.5 396.1V397.9M699.5 396.1V397.9M700.5 395.0V399.0M701.5 396.1V397.9M702.5 396.1V397.9M703.5 396.1V397.9M704.5 396.1V397.9M705.5 396.1V397.9M706.5 396.1V397.9M707.5 395.0V399.0M708.5 396.1V397.9M709.5 396.1V397.9M710.5 395.0V399.0M711.5 395.0V399.0M712.5 396.1V397.9M713.5 396.1V397.9M714.5 395.0V399.0M715.5 396.1V397.9M716.5 395.0V399.0M717.5 396.1V397.9M718.5 396.1V397.9M719.5 396.1V397.9M720.5 396.1V397.9M721.5 396.1V397.9M722.5 396.1V397.9M723.5 396.1V397.9M724.5 396.1V397.9M725.5 396.1V397.9M726.5 396.1V397.9M727.5 396.1V397.9M728.5 396.1V397.9M729.5 396.1V397.9M730.5 396.1V397.9M731.5 396.1V397.9M732.5 396.1V397.9M733.5 396.1V397.9M734.5 396.1V397.9M735.5 396.1V397.9M736.5 396.1V397.9M737.5 396.1V397.9M738.5 396.1V397.9M739.5 396.1V397.9M740.5 396.1V397.9M741.5 396.1V397.9M742.5 396.1V397.9M743.5 396.1V397.9M744.5 396.1V397.9M745.5 396.1V397.9M746.5 396.1V397.9M747.5 395.0V399.0M748.5 396.1V397.9M749.5 396.1V397.9M750.5 396.1V397.9M751.5 394.5V399.5M752.5 396.1V397.9M753.5 396.1V397.9M754.5 396.1V397.9M755.5 396.1V397.9M756.5 395.0V399.0M757.5 396.1V397.9M758.5 395.0V399.0M759.5 396.1V397.9M760.5 396.1V397.9M761.5 394.5V399.5M762.5 395.0V399.0M763.5 396.1V397.9M764.5 396.1V397.9M765.5 396.1V397.9M766.5 395.0V399.0M767.5 395.0V399.0M768.5 394.5V399.5M769.5 396.1V397.9M770.5 396.1V397.9M771.5 396.1V397.9M772.5 396.1V397.9M773.5 396.1V397.9M774.5 394.5V399.5M775.5 396.1V397.9M776.5 394.5V399.5M777.5 396.1V397.9M778.5 396.1V397.9M779.5 396.1V397.9M780.5 396.1V397.9M781.5 396.1V397.9M782.5 396.1V397.9M783.5 396.1V397.9M784.5 396.1V397.9M785.5 396.1V397.9M786.5 396.1V397.9M787.5 396.1V397.9M788.5 396.1V397.9M789.5 396.1V397.9M790.5 395.0V399.0M791.5 396.1V397.9M792.5 396.1V397.9M793.5 396.1V397.9M794.5 396.1V397.9M795.5 396.1V397.9M796.5 396.1V397.9M797.5 396.1V397.9M798.5 396.1V397.9M799.5 396.1V397.9M800.5 395.0V399.0M801.5 396.1V397.9M802.5 396.1V397.9M803.5 396.1V397.9M804.5 396.1V397.9M805.5 396.1V397.9M806.5 394.5V399.5M807.5 394.5V399.5M808.5 396.1V397.9M809.5 396.1V397.9M810.5 396.1V397.9M811.5 396.1V397.9M812.5 396.1V397.9M813.5 396.1V397.9M814.5 396.1V397.9M815.5 396.1V397.9M816.5 394.5V399.5M817.5 396.1V397.9M818.5 395.0V399.0M819.5 396.1V397.9M820.5 396.1V397.9M821.5 396.1V397.9M822.5 395.0V399.0M823.5 396.1V397.9M824.5 396.1V397.9M825.5 395.0V399.0M826.5 396.1V397.9M827.5 396.1V397.9M828.5 396.1V397.9M829.5 396.1V397.9M830.5 396.1V397.9M831.5 396.1V397.9M832.5 396.1V397.9M833.5 396.1V397.9M834.5 396.1V397.9M835.5 395.0V399.0M836.5 396.1V397.9M837.5 396.1V397.9M838.5 396.1V397.9M839.5 396.1V397.9M840.5 394.5V399.5M841.5 396.1V397.9M842.5 396.1V397.9M843.5 396.1V397.9M844.5 395.0V399.0M845.5 396.1V397.9M846.5 396.1V397.9M847.5 396.1V397.9M848.5 396.1V397.9M849.5 396.1V397.9M850.5 395.0V399.0M851.5 396.1V397.9M852.5 396.1V397.9M853.5 396.1V397.9M854.5 396.1V397.9M855.5 396.1V397.9M856.5 395.0V399.0M857.5 396.1V397.9M858.5 396.1V397.9M859.5 396.1V397.9M860.5 396.1V397.9M861.5 396.1V397.9M862.5 395.0V399.0M863.5 396.1V397.9M864.5 396.1V397.9M865.5 396.1V397.9M866.5 396.1V397.9M867.5 396.1V397.9M868.5 396.1V397.9M869.5 396.1V397.9M870.5 396.1V397.9M871.5 396.1V397.9M872.5 396.1V397.9M873.5 396.1V397.9M874.5 396.1V397.9M875.5 394.5V399.5M876.5 396.1V397.9M877.5 396.1V397.9M878.5 396.1V397.9M879.5 396.1V397.9M880.5 396.1V397.9M881.5 396.1V397.9M882.5 396.1V397.9M883.5 395.0V399.0M884.5 395.0V399.0M885.5 395.0V399.0M886.5 396.1V397.9M887.5 396.1V397.9M888.5 394.5V399.5M889.5 396.1V397.9M890.5 396.1V397.9M891.5 396.1V397.9M892.5 395.0V399.0M893.5 389.6V403.1M894.5 379.0V414.0M895.5 387.2V406.3M896.5 392.2V401.1M897.5 392.3V400.8M898.5 392.6V401.6M899.5 392.4V401.2M900.5 392.6V402.1M901.5 392.4V401.0M902.5 390.9V404.3M903.5 393.0V401.1M904.5 391.0V401.9M905.5 392.7V401.9M906.5 393.1V400.7M907.5 392.6V401.3M908.5 393.3V400.0M909.5 390.2V404.5M910.5 385.4V408.6M911.5 371.3V422.7M912.5 356.1V437.9M913.5 340.0V454.0M914.5 347.2V446.8M915.5 354.3V439.7M916.5 361.2V432.8M917.5 368.0V426.0M918.5 374.6V419.4M919.5 380.9V413.1M920.5 386.9V407.1M921.5 391.0V402.7M922.5 391.2V402.1M923.5 392.7V400.8M924.5 392.0V401.3M925.5 393.1V400.4M926.5 392.3V401.3M927.5 392.4V402.5M928.5 391.7V403.1M929.5 378.9V415.1M930.5 364.4V429.5M931.5 372.6V421.3M932.5 380.4V413.5M933.5 387.8V406.2M934.5 391.0V403.5M935.5 393.1V400.7M936.5 393.5V401.2M937.5 392.8V401.6M938.5 386.0V407.0M939.5 393.1V400.5M940.5 392.8V400.5M941.5 391.3V402.3M942.5 324.5V469.5M943.5 281.0V513.0M944.5 252.0V542.0M945.5 263.6V530.4M946.5 281.0V513.0M947.5 295.5V498.5M948.5 317.2V476.8M949.5 346.2V447.8M950.5 368.0V426.0M951.5 385.3V406.5M952.5 386.8V407.6M953.5 388.3V405.1M954.5 388.0V406.1M955.5 390.0V404.6M956.5 393.8V400.4M957.5 392.9V400.5M958.5 394.1V399.7M959.5 392.9V400.9M960.5 393.8V400.7M961.5 394.2V399.6M962.5 394.0V399.7M963.5 394.7V398.9M964.5 393.5V400.6M965.5 393.2V401.6M966.5 394.3V399.9M967.5 393.1V400.5M968.5 393.6V400.6M969.5 393.2V401.4M970.5 394.7V399.5M971.5 394.5V399.5M972.5 394.5V399.1M973.5 394.5V399.3M974.5 394.4V399.4M975.5 395.0V398.9M976.5 394.6V399.1M977.5 394.3V399.4M978.5 395.3V398.6M979.5 394.8V398.9M980.5 394.7V399.5M981.5 394.8V399.4M982.5 394.5V399.5M983.5 395.2V398.5M984.5 395.0V399.0M985.5 395.1V398.9M986.5 395.2V398.7M987.5 394.5V399.5M988.5 395.5V398.8M989.5 395.3V398.5M990.5 395.3V398.5" stroke="#C2C2C2" stroke-width="1" fill="none"/>
    <!-- markers -->
    <path d="M347 397H396" stroke="#1428B4" stroke-width="1.5"/>
    <path d="M842 397H892" stroke="#1428B4" stroke-width="1.5"/>
    <path d="M397 397H421" stroke="#D82020" stroke-width="1.5"/>
    <path d="M893 397H917" stroke="#D82020" stroke-width="1.5"/>
    <path d="M396.5 385V411M446.5 378V418M892.5 385V411M942.5 378V418" stroke="#D82020" stroke-width="1.2"/>
    <path d="M249.5 677V705" stroke="#22BB22" stroke-width="1"/>
  </g>
</svg>

<div class="a" style="left:7px;top:76px;font-size:16px;color:#1C1C7C;line-height:20px;letter-spacing:0.3px">Rate&nbsp; -64.4 s/d<br>Amplitude 164°<br>Beat error 0.71 ms (0.43%)</div>
<div class="a ms" style="left:653px;top:81px;word-spacing:1px">41.7 ms</div>
<div class="a" style="left:5px;top:325px;font-size:9.5px;color:#806060;letter-spacing:0.4px">Drop threshold 19%</div>
<div class="a" style="left:5px;top:380px;font-size:9.5px;color:#608060;letter-spacing:0.4px">Unlock threshold 2%</div>
<div class="a" style="left:399px;top:399px;font-size:10px;color:#207020;word-spacing:2.5px">16.88 ms</div>
<div class="a" style="left:895px;top:399px;font-size:10px;color:#207020;word-spacing:2.5px">16.88 ms</div>

<div class="a info" style="top:576.6px;line-height:12.93px">Profile: &lt;none&gt;<br>Train (nominal) 21600 vph (actual) 21583.9 vph<br>Lift angle&nbsp; 52.0° (lever)<br>Magnification × 1, Zoom × 0.5, Tape feed rate 1:1<br>Measured time 8.00 of 8.00 secs<br>Accumulated rate -48.78 s/d over 0:0:35.0<br>Deviation -19.771 ms in 0:0:35.0, 211 ticks<br>Allen deviation 3.08e-004 Tau 10.00 secs, N=2<br>&nbsp;-51.11 ms to datum<br>High-pass filter ON, N=3<br><span style="color:#10105A">Signal/Noise 35.5 dB, sample rate 96000</span></div>

<div id="panel" class="a">
  <span class="a" style="left:8px;top:4px;font-size:11px">Mic</span>
  <div class="a" style="left:14px;top:30px;width:4px;height:89px;border-left:1px solid #ACA899;border-right:1px solid #fff;background:#7C7A6E"></div>
  <div class="a sl" style="left:5px;top:23px"></div>
  <div class="a" style="left:0px;top:132px;width:32px;height:19px;background:#F4F3EE;border:1px solid #ACA899;border-right-color:#fff;border-bottom-color:#fff;box-shadow:inset 1px 1px 0 #D0CDC0"><span class="a" style="left:5px;top:3px;font-size:11px;letter-spacing:-0.6px">ALC</span></div>
  <span class="a" style="left:2px;top:160px;font-size:11px;letter-spacing:-0.2px">Boost</span>
  <span class="a" style="left:2px;top:173px;font-size:11px;letter-spacing:-0.2px">+15.1</span>
  <div class="a" style="left:-1px;top:189px;width:16px;height:21px;background:#ECE9D8;border:1px solid #fff;border-right-color:#716F64;border-bottom-color:#716F64;font-size:12px;text-align:center;line-height:18px">+</div>
  <div class="a" style="left:16px;top:189px;width:16px;height:21px;background:#ECE9D8;border:1px solid #fff;border-right-color:#716F64;border-bottom-color:#716F64;font-size:12px;text-align:center;line-height:18px">-</div>
  <span class="a" style="left:6px;top:229px;font-size:11px">Vol</span>
  <div class="a" style="left:14px;top:252px;width:4px;height:97px;border-left:1px solid #ACA899;border-right:1px solid #fff;background:#7C7A6E"></div>
  <div class="a sl" style="left:5px;top:259px"></div>
</div>

<div id="status" class="a"><span class="a" style="left:2px;top:3px">eTimer (c) 2002-8 Graham Baxter - Delph Electronics. Oldtime The Best</span></div>

<div id="taskbar" class="a">
  <div class="a" style="left:0;top:0;width:98px;height:30px;border-radius:0 9px 9px 0 / 0 15px 15px 0;background:linear-gradient(#3A8E3A 0px,#6CBA6C 2px,#5AAE5A 4px,#3C9C3C 8px,#36A036 15px,#309430 24px,#287E28 30px);box-shadow:inset -3px 0 3px #1E6A1E"></div>
  <svg class="a" style="left:10px;top:7px" width="20" height="18"><path d="M1 3q4-3 8 0v6q-4-3-8 0z" fill="#F25A22"/><path d="M10 1q4-2 8 1v7q-4-3-8 0z" fill="#7CC13A"/><path d="M0 10q4-3 8 0v7q-4-3-8 0z" fill="#3C8CE8"/><path d="M9 10q4-2 9 0v7q-4-3-9 0z" fill="#FBBB1C"/></svg>
  <span class="a" style="left:35px;top:5px;font-size:18px;font-weight:bold;font-style:italic;color:#fff;text-shadow:1px 1px 1px #1A4A1A;letter-spacing:-0.6px">Start</span>
  <div class="a" style="left:108px;top:4px;width:159px;height:23px;border-radius:3px;background:#1E50C8;box-shadow:inset 1px 1px 1px #10308A"></div>
  <svg class="a" style="left:117px;top:4px" width="20" height="24" shape-rendering="crispEdges">
    <rect x="4" y="4" width="11" height="16" fill="#fff"/>
    <rect x="6" y="4" width="7" height="16" fill="#F4EC20"/>
    <rect x="5" y="6" width="1.5" height="6" fill="#10205A"/>
    <rect x="12.5" y="5" width="1.5" height="7" fill="#10205A"/>
    <rect x="9" y="9" width="2" height="2" fill="#908810"/><rect x="8" y="13" width="2" height="2" fill="#908810"/>
    <rect x="7" y="16" width="2" height="2" fill="#90A010"/>
  </svg>
  <span class="a" style="left:139px;top:10px;font-size:11px;color:#fff">Watch Escapement A...</span>
  <span class="a" style="left:842px;top:9px;font-size:11px;color:#fff">DE</span>
  <div class="a" style="left:877px;top:0;width:147px;height:30px;background:linear-gradient(#0C58B8 0px,#0C58B8 1px,#24A8F8 2px,#1E9CF2 6px,#1890E8 24px,#1474D4 30px);border-left:1px solid #0E4FB0"></div>
  <svg class="a" style="left:887px;top:7px" width="92" height="17">
    <rect x="1" y="4" width="9" height="8" fill="#30305A" stroke="#9898B8" stroke-width="1"/>
    <rect x="2" y="5" width="7" height="6" fill="#5060A0"/>
    <rect x="7" y="1" width="8" height="8" fill="#282848" stroke="#9898B8" stroke-width="1"/>
    <rect x="8" y="2" width="6" height="6" fill="#404880"/>
    <rect x="1" y="12" width="8" height="3" fill="#B0B0D0"/>
    <path d="M9.5 9.5l6 6M15.5 9.5l-6 6" stroke="#E82828" stroke-width="1.8"/>
    <circle cx="27" cy="7" r="5.5" fill="#707070" stroke="#C0C0C0" stroke-width="1"/>
    <circle cx="26" cy="6.5" r="2.8" fill="#202020"/>
    <circle cx="25" cy="5" r="1.2" fill="#E0E0E0"/>
    <path d="M28 15l5-4M30 16l5-4" stroke="#A0B8F8" stroke-width="1"/>
    <path d="M41 4l4-4v2.5h4v3h-4v2.5z" fill="#30D030" stroke="#108010" stroke-width="0.6"/>
    <path d="M39 10l8-3 5 4-8 4z" fill="#90A890" stroke="#404840" stroke-width="1"/>
    <rect x="58.5" y="1" width="9" height="15" rx="1" fill="#1A2A9A" stroke="#102070" stroke-width="1"/>
    <rect x="60" y="0" width="6" height="2" fill="#E8E8F8"/>
    <rect x="61" y="4" width="2" height="4" fill="#D02040"/>
    <rect x="60" y="11" width="2" height="3" fill="#5070E0"/>
    <path d="M75 2.5l5.5-2 5.5 2v5q0 6-5.5 8.5q-5.5-2.5-5.5-8.5z" fill="#C81818" stroke="#F0F0F0" stroke-width="1"/>
    <path d="M78 5.5l5 5M83 5.5l-5 5" stroke="#fff" stroke-width="1.8"/>
  </svg>
  <span class="a" style="left:983px;top:9px;font-size:11px;color:#fff">23:44</span>
</div>
</body></html>
